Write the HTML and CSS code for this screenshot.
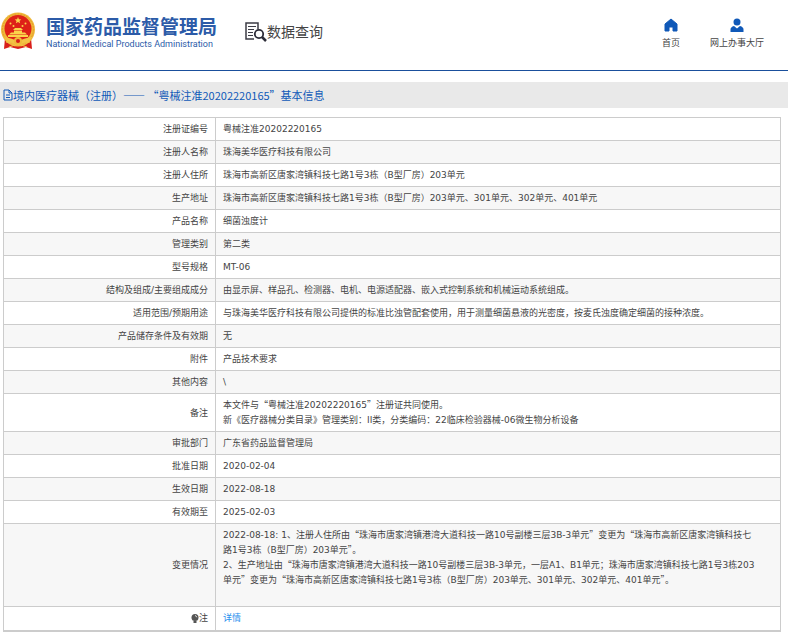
FILE: index.html
```html
<!DOCTYPE html>
<html lang="zh-CN">
<head>
  <meta charset="UTF-8" />
  <title>国家药品监督管理局 数据查询</title>
  <link rel="stylesheet" href="styles.css">
</head>
<body>

  <header class="header">
    <div class="brand">
      <svg class="emblem" viewBox="0 0 36 38" aria-hidden="true">
        <path d="M5 26L4 37l6-2 8 2 8-2 6 2-1-11z" fill="#d81e1a"/>
        <circle cx="18" cy="17.500" r="17" fill="#f0b93a"/>
        <circle cx="18" cy="17.500" r="15.500" fill="none" stroke="#e39a2c" stroke-dasharray="2 1"/>
        <circle cx="18" cy="16.500" r="13.500" fill="#de2118"/>
        <path d="M18 5l.9 2.200 2.400.2-1.800 1.500.6 2.400-2.100-1.300-2.100 1.300.6-2.400-1.800-1.500 2.400-.2z" fill="#fbd44b"/>
        <g fill="#fbd44b">
          <circle cx="10.500" cy="11.500" r="1"/>
          <circle cx="13.500" cy="14" r="1"/>
          <circle cx="22.500" cy="14" r="1"/>
          <circle cx="25.500" cy="11.500" r="1"/>
          <path d="M13 18l2-2h6l2 2zM14 18.500h8v2h-8zM11 20.500h14l2 2H9zM8 23h20v2H8z"/>
        </g>
        <path d="M4 25q7 1 14 4 7-3 14-4l-3 5q-6 0-8 3h-6q-2-3-8-3z" fill="#f3c345"/>
        <circle cx="18" cy="29" r="4" fill="#f0b93a"/>
        <circle cx="18" cy="29" r="2" fill="#d81e1a"/>
        <path d="M6 30q6 0 9 4M30 30q-6 0-9 4M9 35l6-2h6l6 2" fill="none" stroke="#f3c345"/>
      </svg>
      <div class="brand-text">
        <div class="brand-cn">国家药品监督管理局</div>
        <div class="brand-en">National Medical Products Administration</div>
      </div>
    </div>

    <div class="section-name">
      <svg class="search-icon" viewBox="0 0 22 20" aria-hidden="true">
        <path d="M13 7V1H1v16h8" fill="none" stroke="#3c3c46" stroke-width="1.500"/>
        <path d="M3 4.500h8M3 7.500h6M3 10.500h5M3 13.500h5" stroke="#3c3c46"/>
        <circle cx="14" cy="12" r="4.200" fill="#fff" stroke="#2c2c38" stroke-width="1.800"/>
        <path d="M17 15l4 4" stroke="#2c2c38" stroke-width="2.500"/>
      </svg>
      <span>数据查询</span>
    </div>

    <nav class="nav">
      <a href="#">
        <svg viewBox="0 0 14 14" aria-hidden="true"><path d="M7 1L1 6v7h4V9h4v4h4V6z" fill="#1059b8" stroke="#1059b8" stroke-linejoin="round"/></svg>
        首页
      </a>
      <a href="#">
        <svg viewBox="0 0 14 14" aria-hidden="true"><circle cx="7" cy="4" r="3.500" fill="#1059b8"/><path d="M.5 14v-2.500Q.5 9 4 8l3 2.500L10 8q3.500 1 3.500 3.500V14z" fill="#1059b8"/></svg>
        网上办事大厅
      </a>
    </nav>
  </header>

  <h1 class="title">
    <svg viewBox="0 0 10 12" aria-hidden="true"><path d="M1 1h5l3 3v7H1zM6 1v3h3M3 6h4M3 8.500h4" fill="none" stroke="#1059b8"/></svg>
    <span>境内医疗器械（注册）—— “粤械注准20202220165”基本信息</span>
  </h1>

  <table class="info">
    <tbody>
      <tr><th scope="row">注册证编号</th><td>粤械注准20202220165</td></tr>
      <tr><th scope="row">注册人名称</th><td>珠海美华医疗科技有限公司</td></tr>
      <tr><th scope="row">注册人住所</th><td>珠海市高新区唐家湾镇科技七路1号3栋（B型厂房）203单元</td></tr>
      <tr><th scope="row">生产地址</th><td>珠海市高新区唐家湾镇科技七路1号3栋（B型厂房）203单元、301单元、302单元、401单元</td></tr>
      <tr><th scope="row">产品名称</th><td>细菌浊度计</td></tr>
      <tr><th scope="row">管理类别</th><td>第二类</td></tr>
      <tr><th scope="row">型号规格</th><td>MT-06</td></tr>
      <tr><th scope="row">结构及组成/主要组成成分</th><td>由显示屏、样品孔、检测器、电机、电源适配器、嵌入式控制系统和机械运动系统组成。</td></tr>
      <tr><th scope="row">适用范围/预期用途</th><td>与珠海美华医疗科技有限公司提供的标准比浊管配套使用，用于测量细菌悬液的光密度，按麦氏浊度确定细菌的接种浓度。</td></tr>
      <tr><th scope="row">产品储存条件及有效期</th><td>无</td></tr>
      <tr><th scope="row">附件</th><td>产品技术要求</td></tr>
      <tr><th scope="row">其他内容</th><td>\</td></tr>
      <tr>
        <th scope="row">备注</th>
        <td>本文件与<span class="q">“</span>粤械注准20202220165<span class="q">”</span>注册证共同使用。<br>新《医疗器械分类目录》管理类别：II类，分类编码：22临床检验器械-06微生物分析设备</td>
      </tr>
      <tr><th scope="row">审批部门</th><td>广东省药品监督管理局</td></tr>
      <tr><th scope="row">批准日期</th><td>2020-02-04</td></tr>
      <tr><th scope="row">生效日期</th><td>2022-08-18</td></tr>
      <tr><th scope="row">有效期至</th><td>2025-02-03</td></tr>
      <tr>
        <th scope="row">变更情况</th>
        <td>2022-08-18: 1、注册人住所由<span class="q">“</span>珠海市唐家湾镇港湾大道科技一路10号副楼三层3B-3单元<span class="q">”</span>变更为<span class="q">“</span>珠海市高新区唐家湾镇科技七<br>路1号3栋（B型厂房）203单元<span class="q">”</span>。<br>2、生产地址由<span class="q">“</span>珠海市唐家湾镇港湾大道科技一路10号副楼三层3B-3单元，一层A1、B1单元；珠海市唐家湾镇科技七路1号3栋203<br>单元<span class="q">”</span>变更为<span class="q">“</span>珠海市高新区唐家湾镇科技七路1号3栋（B型厂房）203单元、301单元、302单元、401单元<span class="q">”</span>。<br><br></td>
      </tr>
      <tr class="note">
        <th scope="row"><svg viewBox="0 0 8 10" aria-hidden="true"><circle cx="4" cy="3.500" r="3.500" fill="#555"/><path d="M2.500 7h3v2h-3z" fill="#555"/><path d="M4 1.500q1.500.3 1.800 1.800" fill="none" stroke="#ddd"/></svg>注</th>
        <td><a href="#">详情</a></td>
      </tr>
    </tbody>
  </table>

</body>
</html>
```
FILE: styles.css
```css
body {
  margin: 0;
  background: #fff;
  color: #444;
  font-family: "DejaVu Sans", "Noto Sans CJK SC", sans-serif;
  font-size: 9px;
  line-height: 15px;
}

a {
  text-decoration: none;
}

.header {
  display: flex;
  align-items: center;
  height: 70px;
  border-bottom: 1px solid #1a4f9c;
  font-family: "Noto Sans CJK SC", sans-serif;
}

.brand {
  display: flex;
  align-items: center;
  gap: 10px;
  padding-bottom: 8px;
}

.emblem {
  width: 36px;
  height: 38px;
}

.brand-text {
  padding-top: 4px;
  color: #2c5ba8;
}

.brand-cn {
  font-size: 19px;
  font-weight: bold;
  line-height: 22px;
}

.brand-en {
  font-family: Roboto, sans-serif;
  font-size: 9px;
  line-height: 15px;
}

.section-name {
  display: flex;
  align-items: center;
  margin-left: 28px;
  padding-bottom: 8px;
  color: #444;
  font-size: 14px;
  line-height: 20px;
}

.search-icon {
  width: 22px;
  height: 20px;
  padding-top: 2px;
}

.nav {
  display: flex;
  gap: 30px;
  margin-left: auto;
  padding: 0 24px 2px 0;
}

.nav a {
  display: flex;
  flex-direction: column;
  align-items: center;
  gap: 3px;
  color: #444;
}

.nav svg {
  width: 14px;
  height: 14px;
}

.title {
  display: flex;
  align-items: center;
  height: 26px;
  margin: 11px 0 9px;
  padding-left: 3px;
  background: #e9e9e9;
  color: #1059b8;
  font-family: "Noto Sans CJK SC", sans-serif;
  font-size: 11px;
  font-weight: normal;
}

.title svg {
  width: 10px;
  height: 12px;
}

.info {
  width: calc(100% - 10px);
  margin-left: 3px;
  border-collapse: collapse;
}

.info th,
.info td {
  padding: 4px 7px 3px;
  border: 1px solid #ccc;
}

.info th {
  width: 197px;
  font-weight: normal;
  text-align: right;
}

.info tr:nth-child(even) {
  background: #f7f7f7;
}

.info .note th,
.info .note td {
  padding: 4px 7px;
  border-bottom-width: 2px;
}

.note svg {
  width: 8px;
  height: 10px;
  vertical-align: middle;
}

.note a {
  color: #2a90ee;
}

.q {
  font-family: "Noto Sans CJK SC", sans-serif;
  line-height: 1;
}
```
